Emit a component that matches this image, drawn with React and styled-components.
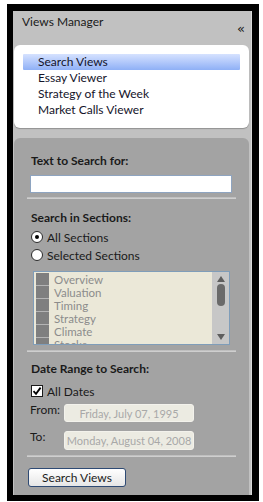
import React from 'react'
import styled, { createGlobalStyle } from 'styled-components'

const GlobalStyle = createGlobalStyle`
  body {
    margin: 0;
    background: #ffffff;
    font-family: Lato, "Open Sans", "Liberation Sans", sans-serif;
  }
`

const Frame = styled.div`
  margin: 4px 0 0 7px;
  width: 252px;
  height: 497px;
  box-sizing: border-box;
  background: #000;
  padding: 7px 7px 6px 6px;
  display: flex;
`

const Panel = styled.div`
  flex: 1;
  background: #c1c1c1;
  display: flex;
  flex-direction: column;
  border-right: 1px solid #d8d8d8;
`

const Header = styled.div`
  height: 34px;
  display: flex;
  justify-content: space-between;
  padding: 3px 6px 0 9px;
  box-sizing: border-box;
  font-size: 12px;
  color: #1a1a1a;
`

const Collapse = styled.span`
  font-family: "DejaVu Sans", sans-serif;
  font-size: 13px;
  line-height: 14px;
  margin-top: 8px;
`

const ViewList = styled.div`
  margin: 0 2px 0 1px;
  height: 83px;
  box-sizing: border-box;
  background: #fff;
  border-radius: 6px;
  padding: 9px 9px;
  box-shadow: 0 1px 1px rgba(0, 0, 0, 0.25);
`

const ViewItem = styled.div`
  height: 16px;
  line-height: 16px;
  padding-left: 15px;
  font-size: 12px;
  color: #14142a;
  background: ${p => p.$active ? 'linear-gradient(#d6e2ff, #8fb0f6)' : 'transparent'};
  border-radius: 1px;
`

const Section = styled.div`
  flex: 1;
  margin: 10px 2px 0 1px;
  background: #a3a3a3;
  border-radius: 6px 6px 0 0;
  padding: 15px 13px 0;
  display: flex;
  flex-direction: column;
`

const Label = styled.div`
  font-weight: 700;
  font-size: 12px;
  line-height: 16px;
  color: #1a1a1a;
  margin: ${p => p.$mt || 0}px 0 0 4px;
`

const TextInput = styled.input`
  margin: 6px 4px 0 3px;
  height: 18px;
  box-sizing: border-box;
  border: 1px solid #8ea4c0;
  background: #fff;
  outline: none;
`

const Separator = styled.div`
  margin-top: ${p => p.$mt || 4}px;
  height: 2px;
  background: linear-gradient(#b8b8b8, #d6d6d6);
`

const OptionRow = styled.label`
  display: flex;
  align-items: center;
  gap: 4px;
  height: 16px;
  margin: ${p => p.$mt || 0}px 0 0 4px;
  font-size: 12px;
  color: #1a1a1a;
`

const Radio = styled.span`
  width: 12px;
  height: 12px;
  box-sizing: border-box;
  border-radius: 50%;
  border: 1px solid #2a2a2a;
  background: #fff;
  display: flex;
  align-items: center;
  justify-content: center;

  &::after {
    content: '';
    width: 4px;
    height: 4px;
    border-radius: 50%;
    background: ${p => p.$checked ? '#000' : 'transparent'};
  }
`

const Check = styled.span`
  width: 12px;
  height: 12px;
  box-sizing: border-box;
  border: 1px solid #1a1a1a;
  background: #fff;
  display: flex;
  align-items: center;
  justify-content: center;
`

const SectionBox = styled.div`
  margin: 8px 6px 0 6px;
  height: 74px;
  box-sizing: border-box;
  border: 1px solid #7f9db9;
  background: #ebe8d8;
  display: flex;
  overflow: hidden;
`

const SectionRows = styled.div`
  flex: 1;
  padding: 1px 0 0 2px;
`

const SectionRow = styled.div`
  display: flex;
  align-items: center;
  gap: 5px;
  height: 13px;
  line-height: 13px;
  font-size: 11.5px;
  color: #8c8c8c;
`

const GrayBox = styled.span`
  width: 13px;
  height: 12px;
  background: #7f7f7f;
  border-bottom: 1px solid #b4b4b4;
`

const ScrollBar = styled.div`
  width: 17px;
  background: #c7c7c7;
  display: flex;
  flex-direction: column;
  align-items: center;
  justify-content: space-between;
  padding: 4px 0 4px;
  box-sizing: border-box;
`

const Arrow = styled.span`
  width: 0;
  height: 0;
  border-left: 4px solid transparent;
  border-right: 4px solid transparent;
  ${p => p.$up ? 'border-bottom: 6px solid #5e5e5e;' : 'border-top: 6px solid #5e5e5e;'}
`

const Thumb = styled.span`
  width: 8px;
  height: 22px;
  border-radius: 4px;
  background: #6a6a6a;
  margin-bottom: 22px;
  margin-top: -4px;
`

const DateRow = styled.div`
  display: flex;
  align-items: flex-start;
  margin-top: ${p => p.$mt}px;
  font-size: 12px;
  color: #1a1a1a;
`

const DateLabel = styled.span`
  width: 34px;
  padding-left: 3px;
  line-height: 14px;
  margin-top: -1px;
`

const DateBox = styled.div`
  width: 130px;
  height: ${p => p.$h}px;
  box-sizing: border-box;
  background: #ecebe2;
  border: 1px solid #f3f2ec;
  border-radius: 3px;
  display: flex;
  align-items: center;
  justify-content: center;
  white-space: nowrap;
  font-size: 11px;
  color: #a8a8a8;
`

const Button = styled.button`
  margin: 11px 0 0 1px;
  width: 98px;
  height: 19px;
  padding: 0;
  border: 1px solid #2e4a74;
  border-radius: 3px;
  background: linear-gradient(#ffffff, #e6e6e6);
  font-family: inherit;
  font-size: 12px;
  color: #1a1a1a;
`

const views = ['Search Views', 'Essay Viewer', 'Strategy of the Week', 'Market Calls Viewer']
const sections = ['Overview', 'Valuation', 'Timing', 'Strategy', 'Climate', 'Stocks']

export default function App() {
  return (
    <>
      <GlobalStyle />
      <Frame>
        <Panel>
          <Header>
            <span>Views Manager</span>
            <Collapse>«</Collapse>
          </Header>
          <ViewList>
            {views.map((v, i) => (
              <ViewItem key={v} $active={i === 0}>{v}</ViewItem>
            ))}
          </ViewList>
          <Section>
            <Label>Text to Search for:</Label>
            <TextInput />
            <Separator />
            <Label $mt={11}>Search in Sections:</Label>
            <OptionRow $mt={3}><Radio $checked />All Sections</OptionRow>
            <OptionRow $mt={2}><Radio />Selected Sections</OptionRow>
            <SectionBox>
              <SectionRows>
                {sections.map(s => (
                  <SectionRow key={s}><GrayBox />{s}</SectionRow>
                ))}
              </SectionRows>
              <ScrollBar>
                <Arrow $up />
                <Thumb />
                <Arrow />
              </ScrollBar>
            </SectionBox>
            <Separator $mt={5} />
            <Label $mt={9}>Date Range to Search:</Label>
            <OptionRow $mt={6}>
              <Check>
                <svg width="10" height="10" viewBox="0 0 10 10">
                  <path d="M1.5 5.2 L4 7.8 L8.6 1.6" fill="none" stroke="#000" strokeWidth="1.8" />
                </svg>
              </Check>
              All Dates
            </OptionRow>
            <DateRow $mt={5}>
              <DateLabel>From:</DateLabel>
              <DateBox $h={18}>Friday, July 07, 1995</DateBox>
            </DateRow>
            <DateRow $mt={9}>
              <DateLabel>To:</DateLabel>
              <DateBox $h={19}>Monday, August 04, 2008</DateBox>
            </DateRow>
            <Separator $mt={5} />
            <div>
              <Button>Search Views</Button>
            </div>
          </Section>
        </Panel>
      </Frame>
    </>
  )
}
